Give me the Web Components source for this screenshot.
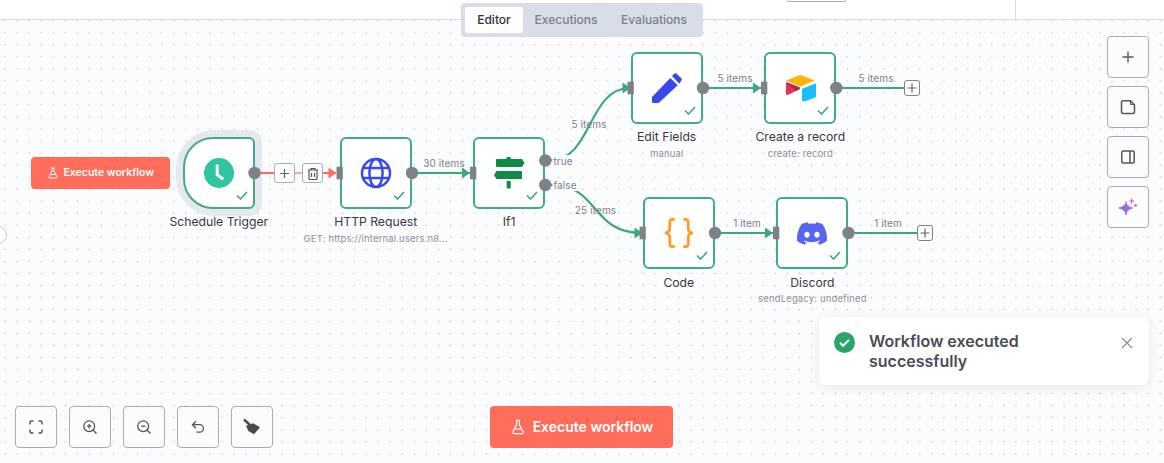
<!DOCTYPE html>
<html lang="en"><head><meta charset="utf-8"><title>Workflow</title>
<style>
html,body{margin:0;padding:0;width:1164px;height:463px;overflow:hidden;background:#fff;font-family:Inter,"Liberation Sans",sans-serif}
</style></head><body>
<wf-app></wf-app>
<script>
const FLASK='<path d="M14 2v6a2 2 0 0 0 .245.96l5.51 10.08A2 2 0 0 1 18 22H6a2 2 0 0 1-1.755-2.96l5.51-10.08A2 2 0 0 0 10 8V2"/><path d="M6.453 15h11.094"/><path d="M8.5 2h7"/>';
const ICONS={
 clock:'<svg width="30" height="30" viewBox="0 0 30 30"><circle cx="15" cy="15" r="15" fill="#2fc5a0"/><path d="M13.2 6.500v10.200l6 4.600" fill="none" stroke="#fff" stroke-width="3"/></svg>',
 globe:'<svg width="32" height="32" viewBox="0 0 32 32" fill="none" stroke="#3b4ce6" stroke-width="2.500"><circle cx="16" cy="16" r="14"/><ellipse cx="16" cy="16" rx="6.600" ry="14"/><path d="M3 11h26M3 21h26"/></svg>',
 sign:'<svg width="32" height="32" viewBox="0 0 32 32" fill="#0f8a47"><path d="M4 2h25l2.500 4-2.500 4H4a1 1 0 0 1-1-1V3a1 1 0 0 1 1-1z"/><path d="M3.500 14H28a1 1 0 0 1 1 1v6a1 1 0 0 1-1 1H3.500L1 18z"/><rect x="13.700" y="0" width="4" height="2.500"/><rect x="13.700" y="24" width="4" height="7.500"/></svg>',
 pencil:'<svg width="30" height="30" viewBox="0 0 30 30" fill="#3b47e8"><path d="M0 24L18.300 5l7.400 7.300L6.700 30H1a1 1 0 0 1-1-1z"/><path d="M20 3l2.200-2.300c.7-.7 1.700-.7 2.400 0l4.700 4.600c.7.700.7 1.700 0 2.400L27.300 10.700z"/></svg>',
 airtable:'<svg width="31" height="26" viewBox="0 0 31 26"><path d="M13.700.5c1-.4 2.400-.4 3.300 0l11.300 4.500c.8.300.8 1 0 1.300L17 11c-1 .4-2.300.4-3.300 0L2.600 6.300c-.8-.3-.8-1 0-1.300z" fill="#fcb400"/><path d="M17 14.500c0-.5.300-.9.700-1.100l12-4.700c.6-.3 1.300.2 1.300.9v11.700c0 .5-.3.900-.7 1.100l-12 4.700c-.6.300-1.300-.2-1.300-.9z" fill="#18bfff"/><path d="M14.500 14.200l-3.600 1.800-.4.200-7.700 3.700C2.200 20.200 1 19.800 1 19V8.300c0-.3.100-.5.300-.6.100-.1.300-.2.400-.2.200-.1.500-.1.700 0l11.900 4.800c.6.300.7 1.500.2 1.900z" fill="#e8305f"/><path d="M14.500 14.200l-3.600 1.800L1.300 7.700c.1-.1.300-.2.400-.2.200-.1.500-.1.700 0l11.900 4.800c.6.300.7 1.500.2 1.900z" fill="#a62b4d"/></svg>',
 code:'<svg width="30" height="30" viewBox="0 0 30 30" fill="none" stroke="#ff9a26" stroke-width="2.700"><path d="M10.800 1.300H8.500C6.800 1.300 5.800 2.300 5.800 4v6.800c0 2.400-1.300 3.700-4.800 4.200 3.500.5 4.800 1.800 4.800 4.200V26c0 1.700 1 2.700 2.700 2.700h2.300"/><path d="M19.200 1.300h2.300c1.700 0 2.700 1 2.700 2.700v6.800c0 2.400 1.300 3.700 4.800 4.200-3.500.5-4.800 1.800-4.800 4.200V26c0 1.700-1 2.700-2.700 2.700h-2.300"/></svg>',
 discord:'<svg width="30" height="23" viewBox="0 0 127.140 96.360" fill="#5865f2"><path d="M107.700,8.070A105.150,105.150,0,0,0,81.470,0a72.060,72.060,0,0,0-3.360,6.830A97.680,97.680,0,0,0,49,6.830,72.370,72.370,0,0,0,45.640,0,105.890,105.890,0,0,0,19.390,8.090C2.790,32.650-1.710,56.600.54,80.210h0A105.730,105.730,0,0,0,32.710,96.360,77.700,77.700,0,0,0,39.600,85.250a68.420,68.420,0,0,1-10.850-5.180c.91-.66,1.800-1.340,2.660-2a75.570,75.570,0,0,0,64.320,0c.87.71,1.760,1.390,2.660,2a68.680,68.680,0,0,1-10.870,5.190,77,77,0,0,0,6.890,11.100A105.250,105.250,0,0,0,126.600,80.220h0C129.240,52.840,122.090,29.110,107.700,8.070ZM42.450,65.690C36.180,65.690,31,60,31,53s5-12.740,11.430-12.740S54,46,53.890,53,48.840,65.690,42.450,65.690Zm42.240,0C78.410,65.690,73.250,60,73.250,53s5-12.740,11.440-12.740S96.230,46,96.120,53,91.080,65.690,84.690,65.690Z"/></svg>',
 plus:'<svg width="16" height="16" viewBox="0 0 16 16" fill="none" stroke="#555" stroke-width="1.400"><path d="M8 2.500v11M2.500 8h11"/></svg>',
 note:'<svg width="16" height="16" viewBox="0 0 16 16" fill="none" stroke="#555" stroke-width="1.500" stroke-linejoin="round"><path d="M3 1.800h7.500l4 4V13a1.500 1.500 0 0 1-1.500 1.500H3A1.500 1.500 0 0 1 1.500 13V3.300A1.500 1.500 0 0 1 3 1.800z"/><path d="M10.500 1.800v2.700a1 1 0 0 0 1 1h3" stroke-width="1.200"/></svg>',
 panel:'<svg width="16" height="16" viewBox="0 0 16 16" fill="none" stroke="#555" stroke-width="1.500"><rect x="1.800" y="2" width="12.400" height="12" rx="1.500"/><path d="M10 2v12"/></svg>',
 spark:'<svg width="20" height="20" viewBox="0 0 20 20"><defs><linearGradient id="g" x1="0" y1="1" x2="1" y2="0"><stop offset="0" stop-color="#5b60e8"/><stop offset="1" stop-color="#d56fd0"/></linearGradient></defs><path d="M8 4.500c.6 3.600 2.200 5.300 7 6.500-4.800 1.200-6.400 2.900-7 7-.6-4.100-2.200-5.800-7.200-7C5.800 9.800 7.400 8.100 8 4.500z" fill="url(#g)" stroke="url(#g)" stroke-width=".8"/><path d="M13.600 1.500v5M11.200 4h5" stroke="#a56be0" stroke-width="1.200" fill="none"/><circle cx="17.500" cy="8.300" r="1.500" fill="#d878cc"/></svg>',
 fit:'<svg width="16" height="16" viewBox="0 0 16 16" fill="none" stroke="#555" stroke-width="1.500"><path d="M2 5.500V3.500A1.500 1.500 0 0 1 3.500 2h2M10.500 2h2A1.500 1.500 0 0 1 14 3.500v2M14 10.500v2a1.500 1.500 0 0 1-1.500 1.500h-2M5.500 14h-2A1.500 1.500 0 0 1 2 12.500v-2"/></svg>',
 zin:'<svg width="16" height="16" viewBox="0 0 16 16" fill="none" stroke="#555" stroke-width="1.300"><circle cx="7.200" cy="7.200" r="5.400"/><path d="M11.200 11.200l3.300 3.300M7.200 5v4.400M5 7.200h4.400"/></svg>',
 zout:'<svg width="16" height="16" viewBox="0 0 16 16" fill="none" stroke="#555" stroke-width="1.300"><circle cx="7.200" cy="7.200" r="5.400"/><path d="M11.200 11.200l3.300 3.300M5 7.200h4.400"/></svg>',
 undo:'<svg width="16" height="16" viewBox="0 0 16 16" fill="none" stroke="#555" stroke-width="1.300"><path d="M6 2.200L2.500 5.700 6 9.200"/><path d="M2.500 5.700h7.200a3.700 3.700 0 0 1 0 7.500H6.500"/></svg>',
 broom:'<svg width="18" height="18" viewBox="0 0 18 18" fill="#4a4a4a"><path d="M1 1.500l6 5.500" stroke="#4a4a4a" stroke-width="2.400" fill="none"/><path d="M3 7.700l7.300-2.400 6.700 4-6 7-5.700-3.300z"/></svg>'
};

class WfNode extends HTMLElement{
 connectedCallback(){
  const x=this.getAttribute('x'),y=this.getAttribute('y');
  const s=this.attachShadow({mode:'open'});
  s.innerHTML=`<style>
  :host{position:absolute;left:${x}px;top:${y}px;width:72px;height:72px;display:block}
  .box{box-sizing:border-box;width:72px;height:72px;background:#fff;border:2px solid #3fad7f;border-radius:6px;display:flex;align-items:center;justify-content:center;position:relative}
  :host([trigger]) .box{border-radius:30px 6px 6px 30px}
  :host([trigger]) .box::before{content:"";position:absolute;inset:-9px;z-index:-1;border-radius:38px 13px 13px 38px;background:#e6e8ef}
  .wrap{position:relative;z-index:0;width:72px;height:72px}
  .check{position:absolute;right:5px;bottom:7px;display:block}
  .txt{position:absolute;top:78.400px;left:50%;transform:translateX(-50%);width:220px;text-align:center;font:400 12.200px/14px Inter,"Liberation Sans",sans-serif;color:#373945}
  .sub{margin-top:3.400px;font-size:9.500px;line-height:12px;letter-spacing:.15px;color:#8d909c;min-height:12px}
  </style><div class="wrap"><div class="box"><slot></slot><svg class="check" width="12" height="9" viewBox="0 0 12 9" fill="none" stroke="#3aa97a" stroke-width="1.600"><path d="M1 4.500l3.500 3.500L11 1"/></svg></div></div>
  <div class="txt">${this.getAttribute('name')}<div class="sub">${this.getAttribute('sub')||''}</div></div>`;
 }
}
customElements.define('wf-node',WfNode);

class WfEdges extends HTMLElement{
 connectedCallback(){
  const s=this.attachShadow({mode:'open'});
  const G='#3aa97a',R='#ff6d5a',P='#7f8188';
  const line=(d,c=G,w=2.200)=>`<path d="${d}" fill="none" stroke="${c}" stroke-width="${w}"/>`;
  const head=(x,y,c=G)=>`<path d="M${x-8} ${y-5.500}L${x} ${y}L${x-8} ${y+5.500}z" fill="${c}"/>`;
  const inp=(x,y)=>`<rect x="${x}" y="${y-6.300}" width="6.300" height="12.600" fill="${P}"/>`;
  const out=(x,y)=>`<circle cx="${x}" cy="${y}" r="6.200" fill="${P}"/>`;
  s.innerHTML=`<style>:host{position:absolute;inset:0;display:block;pointer-events:none}svg{display:block}</style>
  <svg width="1164" height="443" viewBox="0 20 1164 443">
  ${line('M254 173H336',R)}${line('M295 173H302','#ffa99c')}${head(336.500,173,R)}
  ${line('M412 173H470')}${head(470,173)}
  ${line('M551 160C592 160 588 88 630 88')}${head(630.500,88)}
  ${line('M551 185C600 185 590 233 642 233')}${head(642.500,233)}
  ${line('M703 88H761')}${head(761,88)}
  ${line('M836 88H905')}
  ${line('M715 233H773')}${head(773,233)}
  ${line('M848 233H917')}
  ${inp(336.500,173)}${inp(470,173)}${inp(627.500,88)}${inp(761,88)}${inp(639.500,233)}${inp(773,233)}
  ${out(254.500,173)}${out(412,173)}${out(545.300,160.500)}${out(545.300,185)}${out(703,88)}${out(836.300,88)}${out(715,233)}${out(848.500,233)}
  </svg>`;
 }
}
customElements.define('wf-edges',WfEdges);

class WfLabel extends HTMLElement{
 connectedCallback(){
  const s=this.attachShadow({mode:'open'});
  s.innerHTML=`<style>:host{position:absolute;left:${this.getAttribute('x')}px;top:${this.getAttribute('y')}px;display:block;font:400 10px/12px Inter,"Liberation Sans",sans-serif;letter-spacing:.1px;color:#7d808c;white-space:nowrap;transform:translate(-50%,-50%)}
  :host([mask]){background:#fbfcfe;padding:0 1px}</style><slot></slot>`;
 }
}
customElements.define('wf-label',WfLabel);

class WfMini extends HTMLElement{
 connectedCallback(){
  const s=this.attachShadow({mode:'open'});
  const sz=this.getAttribute('w')||16,h=this.getAttribute('h')||16;
  s.innerHTML=`<style>:host{position:absolute;left:${this.getAttribute('x')}px;top:${this.getAttribute('y')}px;width:${sz}px;height:${h}px;box-sizing:border-box;display:flex;align-items:center;justify-content:center;background:#fbfcfe;border:1.500px solid ${this.getAttribute('c')||'#7e8186'};border-radius:3px}</style><slot></slot>`;
 }
}
customElements.define('wf-mini',WfMini);

class WfTool extends HTMLElement{
 connectedCallback(){
  const s=this.attachShadow({mode:'open'});
  s.innerHTML=`<style>:host{box-sizing:border-box;width:42px;height:42px;display:flex;align-items:center;justify-content:center;background:#fbfcfe;border:1px solid #a9acba;border-radius:4px}</style><slot></slot>`;
  this.innerHTML=ICONS[this.getAttribute('icon')];
 }
}
customElements.define('wf-tool',WfTool);

class WfExec extends HTMLElement{
 connectedCallback(){
  const s=this.attachShadow({mode:'open'});
  s.innerHTML=`<style>
  :host{box-sizing:border-box;display:flex;align-items:center;justify-content:center;gap:7px;background:#ff6d5a;color:#fff;border-radius:4px;font:600 14px/1 Inter,"Liberation Sans",sans-serif;height:42px;width:183px}
  :host([small]){height:32px;width:139px;font-size:10.500px;gap:4.500px;position:absolute;left:31px;top:137px}
  svg{width:16px;height:16px;fill:none;stroke:#fff;stroke-width:1.800}
  :host([small]) svg{width:12px;height:12px;stroke-width:2}
  </style><svg viewBox="0 0 24 24">${FLASK}</svg><slot></slot>`;
 }
}
customElements.define('wf-exec',WfExec);

class WfTabs extends HTMLElement{
 connectedCallback(){
  const s=this.attachShadow({mode:'open'});
  s.innerHTML=`<style>
  :host{position:absolute;left:461px;top:3px;width:242px;height:34px;box-sizing:border-box;padding:4px;display:flex;gap:0;background:#d9dde8;border-radius:4px;font:500 12px/26px Inter,"Liberation Sans",sans-serif;color:#7b7e8c}
  div{text-align:center}
  .a{width:58px;background:#fff;border-radius:3px;color:#2d2e3a}
  .b{width:86px}.c{width:90px}
  </style><div class="a">Editor</div><div class="b">Executions</div><div class="c">Evaluations</div>`;
 }
}
customElements.define('wf-tabs',WfTabs);

class WfHeader extends HTMLElement{
 connectedCallback(){
  const s=this.attachShadow({mode:'open'});
  s.innerHTML=`<style>
  :host{display:flex;box-sizing:border-box;height:20px;background:#fff;border-bottom:1px solid #d9dce5}
  .btn{margin-left:787px;width:59px;height:2px;box-sizing:border-box;border:1px solid #a9acba;border-top:0;border-radius:0 0 3px 3px}
  .v{margin-left:169px;width:1px;height:19px;background:#d9dce5}
  </style><div class="btn"></div><div class="v"></div>`;
 }
}
customElements.define('wf-header',WfHeader);

class WfToast extends HTMLElement{
 connectedCallback(){
  const s=this.attachShadow({mode:'open'});
  s.innerHTML=`<style>
  :host{position:absolute;left:819px;top:297px;width:330px;height:68px;box-sizing:border-box;padding:14px 15px;display:flex;gap:14px;background:#fff;border-radius:6px;box-shadow:0 2px 12px rgba(40,50,90,.1);font:600 16px/20px Inter,"Liberation Sans",sans-serif;color:#4b4c55}
  .t{flex:1;width:170px}
  .x{margin-top:5px}
  .i{margin-top:1px}
  </style><svg class="i" width="21" height="21" viewBox="0 0 21 21"><circle cx="10.500" cy="10.500" r="10.500" fill="#2aa566"/><path d="M6 10.800l3.100 3 5.900-5.900" fill="none" stroke="#fff" stroke-width="2"/></svg><div class="t">Workflow executed<br>successfully</div><svg class="x" width="14" height="14" viewBox="0 0 14 14" fill="none" stroke="#8b8e9a" stroke-width="1.200"><path d="M2 2l10 10M12 2L2 12"/></svg>`;
 }
}
customElements.define('wf-toast',WfToast);

class WfApp extends HTMLElement{
 connectedCallback(){
  const s=this.attachShadow({mode:'open'});
  s.innerHTML=`<style>
  :host{display:block;position:relative;width:1164px;height:463px;overflow:hidden;font-family:Inter,"Liberation Sans",sans-serif}
  .canvas{position:relative;height:443px;background-color:#fbfcfe;background-image:radial-gradient(circle at 6px 6px,#d6d8e1 .8px,transparent 1.100px);background-size:12.040px 12.040px;background-position:-.7px -5.300px}
  .side{position:absolute;left:-11px;top:206px;width:18px;height:18px;box-sizing:border-box;border-radius:50%;background:#fff;border:1px solid #c6c9d4}
  .right{position:absolute;left:1107px;top:16px;display:flex;flex-direction:column;gap:8px}
  .bottom{position:absolute;left:15px;top:386px;display:flex;gap:12px}
  .run{position:absolute;left:490px;top:386px}
  </style>
  <wf-header></wf-header>
  <div class="canvas">
   <div class="side"></div>
   <wf-exec small>Execute workflow</wf-exec>
   <wf-node x="182.800" y="117" trigger name="Schedule Trigger">${ICONS.clock}</wf-node>
   <wf-node x="339.700" y="117" name="HTTP Request" sub="GET: https://internal.users.n8...">${ICONS.globe}</wf-node>
   <wf-node x="473.200" y="117" name="If1">${ICONS.sign}</wf-node>
   <wf-node x="630.700" y="32" name="Edit Fields" sub="manual">${ICONS.pencil}</wf-node>
   <wf-node x="764.300" y="32" name="Create a record" sub="create: record">${ICONS.airtable}</wf-node>
   <wf-node x="642.800" y="177.300" name="Code">${ICONS.code}</wf-node>
   <wf-node x="776.400" y="177.300" name="Discord" sub="sendLegacy: undefined">${ICONS.discord}</wf-node>
   <wf-edges></wf-edges>
   <wf-mini x="274" y="143" w="21" h="20" c="#a9acba"><svg width="11" height="11" viewBox="0 0 11 11" fill="none" stroke="#666" stroke-width="1.200"><path d="M5.500 1v9M1 5.500h9"/></svg></wf-mini>
   <wf-mini x="302" y="143" w="21" h="20" c="#a9acba"><svg width="12" height="13" viewBox="0 0 12 13" fill="none" stroke="#555" stroke-width="1.200"><path d="M2 3h8v8.500a1 1 0 0 1-1 1H3a1 1 0 0 1-1-1zM1 3h10M4 1.500h4v1.500H4zM4.500 6v4M7.500 6v4"/></svg></wf-mini>
   <wf-mini x="904" y="60"><svg width="10" height="10" viewBox="0 0 10 10" fill="none" stroke="#666" stroke-width="1.200"><path d="M5 .5v9M.5 5h9"/></svg></wf-mini>
   <wf-mini x="916.500" y="205"><svg width="10" height="10" viewBox="0 0 10 10" fill="none" stroke="#666" stroke-width="1.200"><path d="M5 .5v9M.5 5h9"/></svg></wf-mini>
   <wf-label x="444" y="143">30 items</wf-label>
   <wf-label mask x="563" y="140.500">true</wf-label>
   <wf-label mask x="565" y="165">false</wf-label>
   <wf-label x="589" y="104">5 items</wf-label>
   <wf-label x="595.500" y="189.500">25 items</wf-label>
   <wf-label x="735" y="58">5 items</wf-label>
   <wf-label x="876" y="58">5 items</wf-label>
   <wf-label x="747" y="203">1 item</wf-label>
   <wf-label x="888" y="203">1 item</wf-label>
   <div class="right"><wf-tool icon="plus"></wf-tool><wf-tool icon="note"></wf-tool><wf-tool icon="panel"></wf-tool><wf-tool icon="spark"></wf-tool></div>
   <div class="bottom"><wf-tool icon="fit"></wf-tool><wf-tool icon="zin"></wf-tool><wf-tool icon="zout"></wf-tool><wf-tool icon="undo"></wf-tool><wf-tool icon="broom"></wf-tool></div>
   <wf-exec class="run">Execute workflow</wf-exec>
   <wf-toast></wf-toast>
  </div>
  <wf-tabs></wf-tabs>`;
 }
}
customElements.define('wf-app',WfApp);
</script>
</body></html>
